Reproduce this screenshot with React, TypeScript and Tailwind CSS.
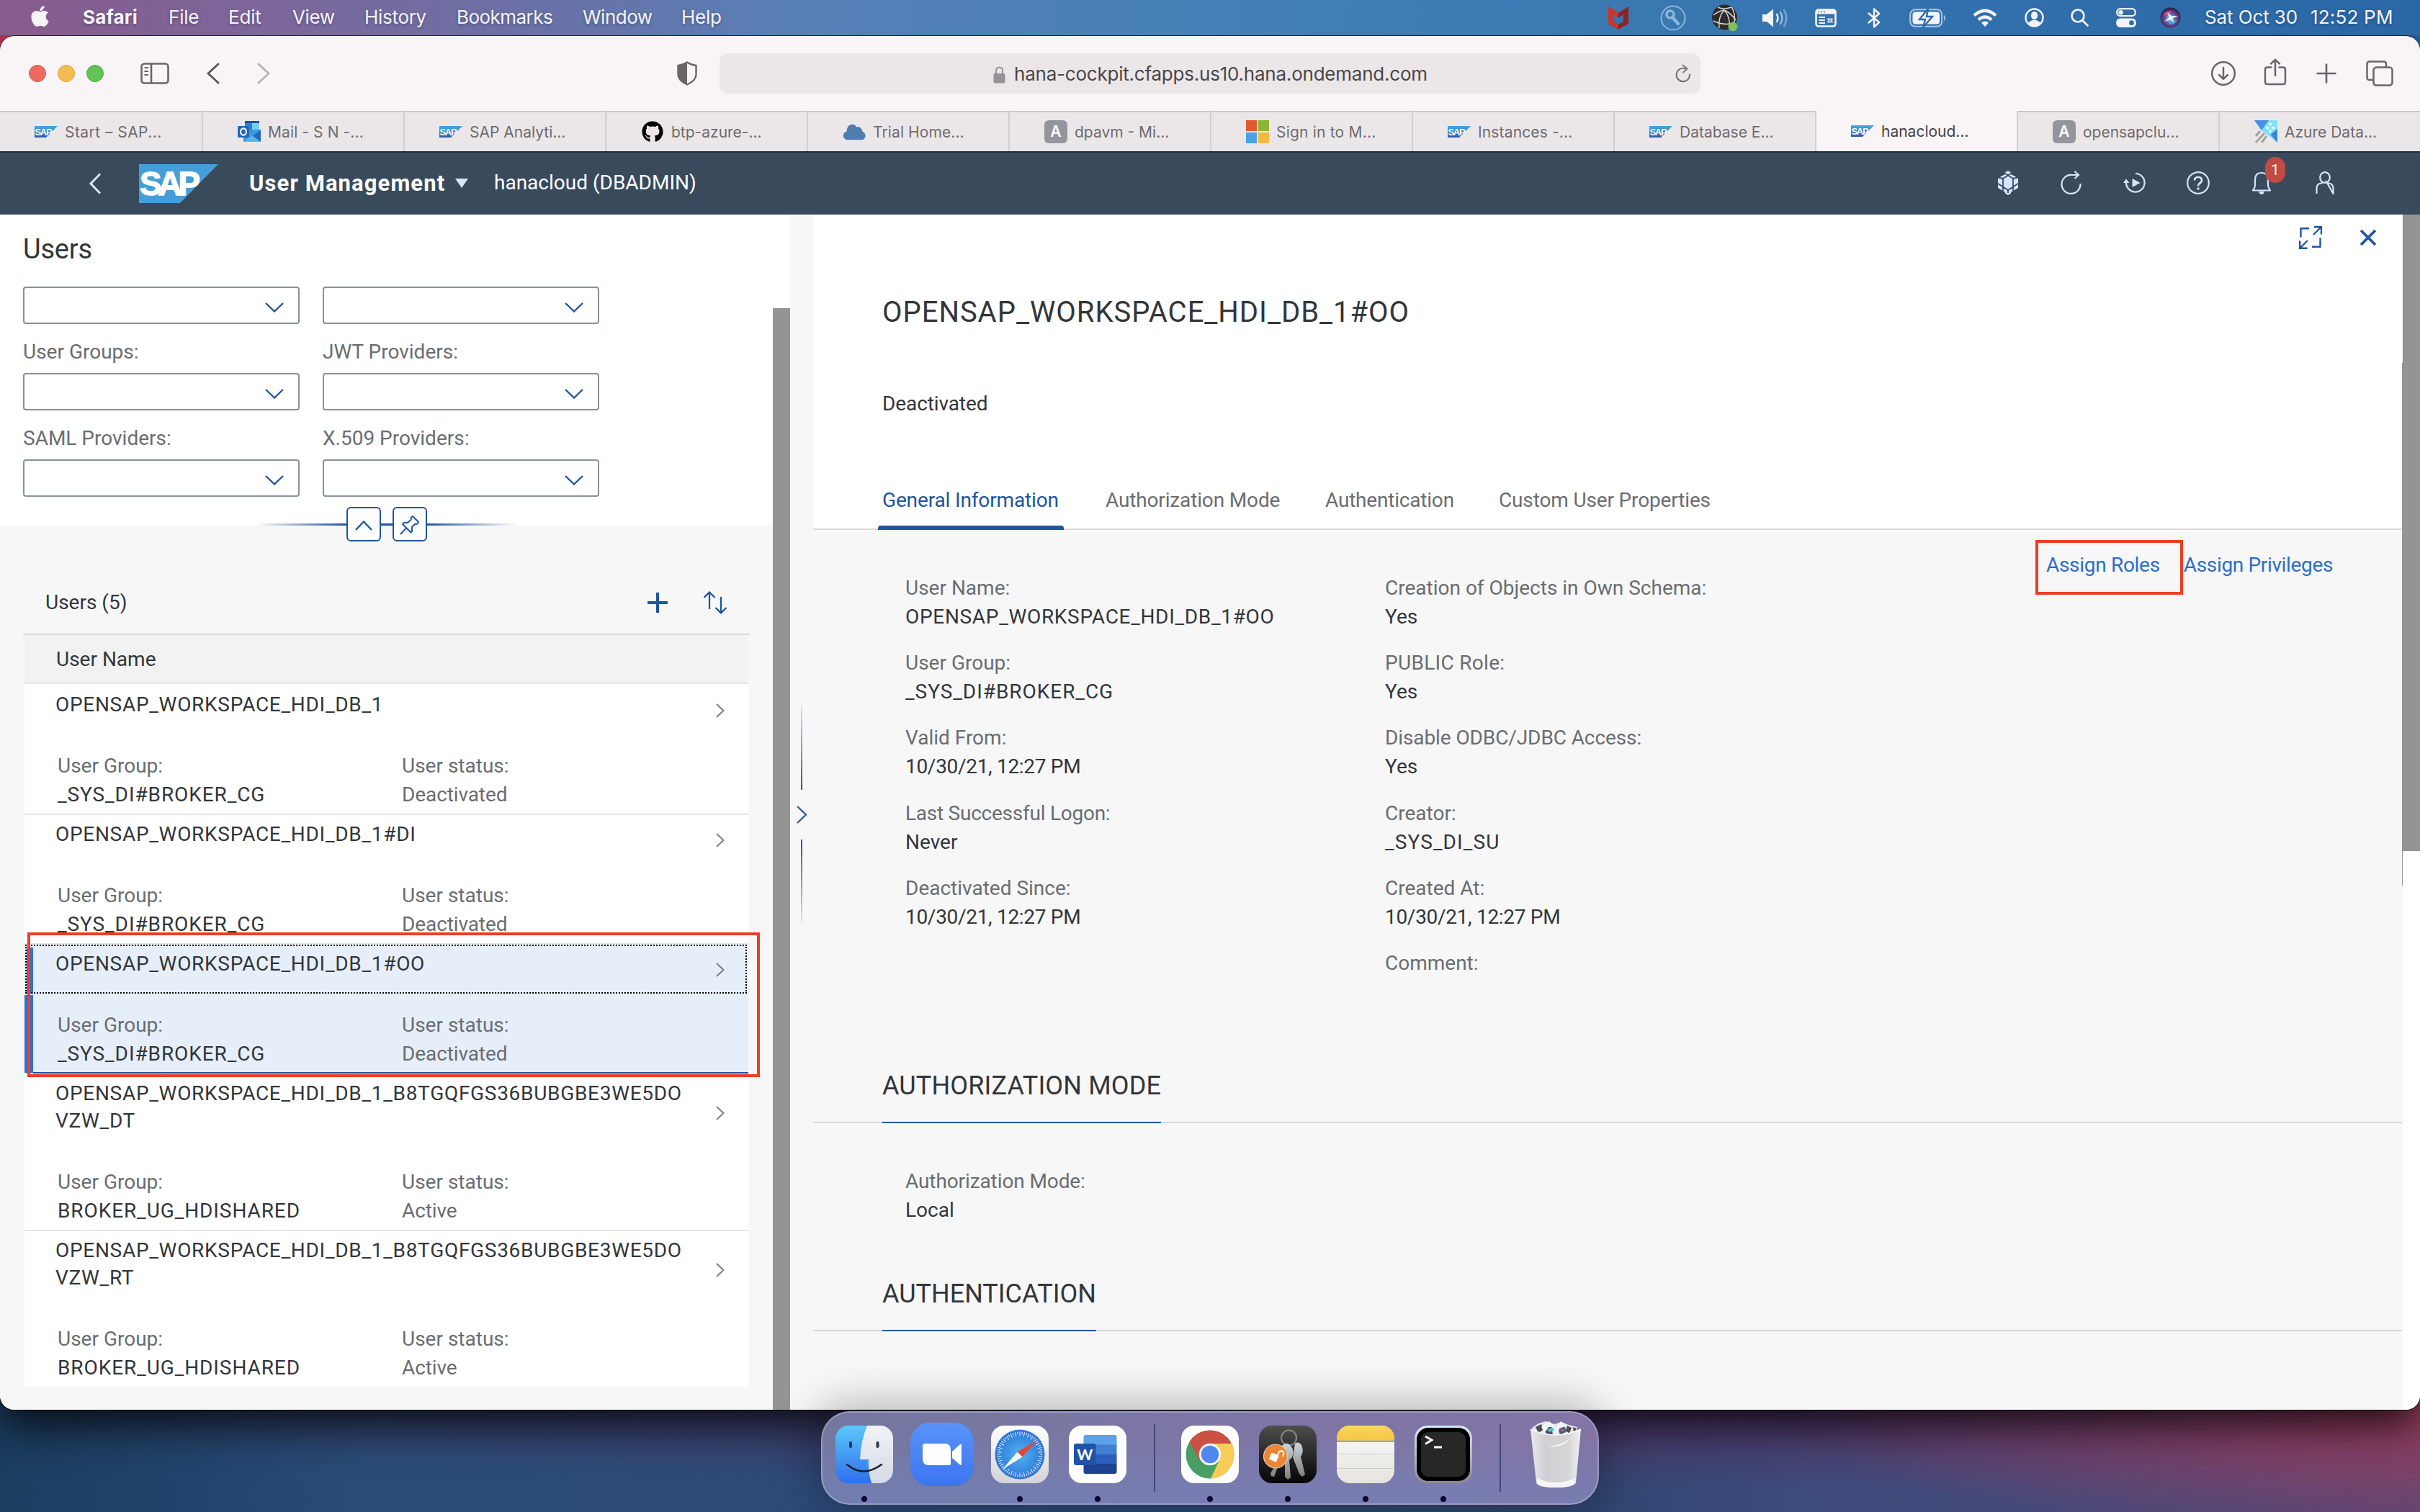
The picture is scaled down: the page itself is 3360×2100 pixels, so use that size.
import React from "react";
import { FaApple, FaGithub } from "react-icons/fa";

type Children = { children?: React.ReactNode };

/* ---------- shared marks ---------- */

function SapMini() {
  return (
    <svg width="32" height="16" viewBox="0 0 32 16" className="shrink-0">
      <defs>
        <linearGradient id="sapMini" x1="0" y1="0" x2="0" y2="1">
          <stop offset="0" stopColor="#45a9e3" />
          <stop offset="1" stopColor="#2d5cab" />
        </linearGradient>
      </defs>
      <path d="M0 0H32L16 16H0Z" fill="url(#sapMini)" />
      <text x="0.5" y="12.6" fontFamily="Liberation Sans, sans-serif" fontWeight="700" fontSize="13" letterSpacing="-1.3" fill="#fff">SAP</text>
    </svg>
  );
}

function OutlookIcon() {
  return (
    <svg width="32" height="30" viewBox="0 0 32 30" className="shrink-0">
      <rect x="10" y="0" width="20" height="16" fill="#1f4f9c" />
      <rect x="10" y="3" width="10" height="12" fill="#2f7fd2" />
      <rect x="20" y="3" width="10" height="12" fill="#6fd0f5" />
      <path d="M8 12H32V29H8Z" fill="#3d97de" />
      <path d="M8 13L20 21L32 13V29Z" fill="#2567b8" />
      <path d="M8 29L20 20L32 29Z" fill="#58b4ee" />
      <rect x="0" y="7" width="16" height="16" rx="1.5" fill="#1f66bd" />
      <ellipse cx="8" cy="15" rx="4" ry="4.6" fill="none" stroke="#fff" strokeWidth="2.2" />
    </svg>
  );
}

function CloudIcon() {
  return (
    <svg width="32" height="24" viewBox="0 0 34 24" className="shrink-0">
      <path d="M8 24C3 24 1 20.500 1 17.500C1 14 3.500 12 6 11.500C6 5 9.500 1 14 1C17 1 19.500 2.500 20.500 5C24 4 28.500 6 29 11.500C32 12.500 33.500 15 33.500 18C33.500 21.500 31 24 27 24Z" fill="#4f7eae" />
    </svg>
  );
}

function MicrosoftIcon() {
  return (
    <svg width="32" height="32" viewBox="0 0 32 32" className="shrink-0">
      <rect width="15" height="15" fill="#e1592f" />
      <rect x="17" width="15" height="15" fill="#8bb536" />
      <rect y="17" width="15" height="15" fill="#48a3e7" />
      <rect x="17" y="17" width="15" height="15" fill="#f4b83e" />
    </svg>
  );
}

function AzureDataIcon() {
  return (
    <svg width="32" height="32" viewBox="0 0 32 32" className="shrink-0">
      <path d="M0 0H32V31L10 14Z" fill="#7fe0f7" />
      <path d="M0 0H20L10 14Z" fill="#4a90dd" />
      <path d="M32 6V31L20 17Z" fill="#3b84d6" />
      <path d="M12 13L20 3H32V12L22 20Z" fill="#7fe3f9" />
      <path d="M2 22L8 15M2 31L14 18M10 31L17 22" stroke="#a5a2a5" strokeWidth="3" />
      <g fill="#fff">
        <circle cx="22" cy="5.500" r="2" />
        <circle cx="18" cy="10.500" r="2" />
        <circle cx="26" cy="10.500" r="2" />
        <circle cx="22" cy="15" r="2" />
      </g>
    </svg>
  );
}

function LetterIcon() {
  return (
    <span className="flex h-8 w-8 shrink-0 items-center justify-center rounded-md bg-[#94949e] text-[21px] font-semibold text-white">A</span>
  );
}

/* ---------- macOS menu bar ---------- */

const menus: [string, string][] = [
  ["Safari", "w-[119px] font-bold tracking-[0.2px]"],
  ["File", "w-[83px] tracking-[-0.2px]"],
  ["Edit", "w-[89px] tracking-[-0.2px]"],
  ["View", "w-[100px] tracking-[-0.4px]"],
  ["History", "w-[128px] tracking-[-0.3px]"],
  ["Bookmarks", "w-[175px] tracking-[-0.55px]"],
  ["Window", "w-[137px] tracking-[-0.5px]"],
  ["Help", "w-[80px] tracking-[-0.3px]"],
];

function MenuBar() {
  return (
    <div className="relative z-10 flex h-[49px] shrink-0 items-center bg-[linear-gradient(to_right,#885b8e,#7b689c_12%,#6c70a6_21%,#577fb5_33%,#4581b8_50%,#3b79b2_66%,#306eac_85%,#2b67a5)] text-[26px] text-[#f4f4f8] [text-shadow:0_2px_4px_rgba(0,0,0,0.25)]">
      <FaApple className="ml-[43px] mr-[47px] h-[33px] w-[25px] -translate-y-0.5" />
      {menus.map(([label, cls]) => (
        <span key={label} className={`shrink-0 -translate-y-px ${cls}`}>{label}</span>
      ))}

      <div className="ml-auto flex items-center">
        <svg width="28" height="32" viewBox="0 0 28 32">
          <path d="M0 0L14 9L28 0V24L14 32L0 24Z" fill="#8d2322" />
          <path d="M0 0L14 9V16L7 11.500V21L14 25V32L0 24Z" fill="#c9352c" />
          <path d="M7 11L14 16L21 11V21L14 25L7 21Z" fill="#3474b0" />
        </svg>
        <svg className="ml-[44px]" width="36" height="38" viewBox="0 0 36 38" fill="none" stroke="#8db6dc">
          <circle cx="18" cy="19" r="16.500" strokeWidth="2" />
          <circle cx="14" cy="14" r="5" strokeWidth="3.500" />
          <path d="M17 18L25 27" strokeWidth="4.500" strokeLinecap="round" />
        </svg>
        <svg className="ml-[36px]" width="36" height="38" viewBox="0 0 36 38">
          <circle cx="17.500" cy="18" r="17.500" fill="#2d2c2c" />
          <g fill="none" stroke="#d9d5cf" strokeWidth="1.500">
            <path d="M8 4Q16 8 27 4M2 15Q10 9 17 8Q26 12 33 22M17 8Q8 18 10 33M17 8Q26 18 24 34M2 23Q16 30 31 26M27 4Q33 12 31 26" />
          </g>
          <circle cx="29" cy="31" r="6.500" fill="#7fc05b" />
        </svg>
        <svg className="ml-[34px]" width="37" height="28" viewBox="0 0 37 28">
          <path d="M0 9H6L15 1.500V26.500L6 19H0Z" fill="#f4f4f8" />
          <g fill="none" strokeWidth="2.400" strokeLinecap="round">
            <path d="M20 9Q23 14 20 19" stroke="#f4f4f8" />
            <path d="M25 6Q30 14 25 22" stroke="#9dbfe0" />
            <path d="M30 3Q37 14 30 25" stroke="#7ba8d3" />
          </g>
        </svg>
        <svg className="ml-[36px]" width="30" height="26" viewBox="0 0 30 26">
          <rect x="1.500" y="1.500" width="27" height="23" rx="3.500" fill="none" stroke="#f4f4f8" strokeWidth="2.600" />
          <rect x="1.500" y="2" width="27" height="5.500" fill="#f4f4f8" />
          <path d="M4 4.500H6M8 4.500H10M12 4.500H14" stroke="#3474b0" strokeWidth="1.600" />
          <path d="M5.500 12H14M5.500 16H14M5.500 20H14" stroke="#f4f4f8" strokeWidth="2" />
          <path d="M19 13.500V19M22.500 13.500V19M17 14.500H25M17 18.500H25" stroke="#f4f4f8" strokeWidth="1.500" />
        </svg>
        <svg className="ml-[43px]" width="18" height="28" viewBox="0 0 18 28" fill="none" stroke="#f4f4f8" strokeWidth="2.400" strokeLinejoin="round" strokeLinecap="round">
          <path d="M1.500 7.500L16 20L9 26.500V1.500L16 8L1.500 20.500" />
        </svg>
        <svg className="ml-[40px]" width="51" height="26" viewBox="0 0 51 26">
          <rect x="1.200" y="1.200" width="44" height="23.600" rx="7" fill="none" stroke="#a9c7e4" strokeWidth="2" />
          <rect x="4.500" y="4.500" width="37.500" height="17" rx="4" fill="#f4f4f8" />
          <path d="M26 0L14 15H22L19 26L32 11H24Z" fill="#f4f4f8" stroke="#306eab" strokeWidth="2.500" />
          <path d="M48 8.500Q51.500 13 48 17.500Z" fill="#a9c7e4" />
        </svg>
        <svg className="ml-[37px]" width="34" height="25" viewBox="0 0 34 25" fill="none" stroke="#f4f4f8" strokeWidth="4.200">
          <path d="M2 9.500Q17 -4 32 9.500" />
          <path d="M8 15.500Q17 7.500 26 15.500" />
          <path d="M12 19.500Q17 15.500 22 19.500L17 25Z" fill="#f4f4f8" stroke="none" />
        </svg>
        <svg className="ml-[38px]" width="27" height="27" viewBox="0 0 27 27">
          <circle cx="13.500" cy="13.500" r="12" fill="none" stroke="#f4f4f8" strokeWidth="2.400" />
          <ellipse cx="13.500" cy="10.500" rx="4.600" ry="5.500" fill="#f4f4f8" />
          <path d="M4.500 21Q13.500 12.500 22.500 21Q13.500 30 4.500 21Z" fill="#f4f4f8" />
        </svg>
        <svg className="ml-[37px]" width="25" height="25" viewBox="0 0 25 25" fill="none" stroke="#f4f4f8" strokeWidth="2.700" strokeLinecap="round">
          <circle cx="10" cy="10" r="8.500" />
          <path d="M16.500 16.500L23.500 23.500" />
        </svg>
        <svg className="ml-[38px]" width="28" height="27" viewBox="0 0 28 27">
          <rect x="1.200" y="1.200" width="25.600" height="10" rx="5" fill="none" stroke="#f4f4f8" strokeWidth="2.300" />
          <circle cx="6.500" cy="6.200" r="3.200" fill="#f4f4f8" />
          <rect x="0" y="14.500" width="28" height="12.500" rx="6.200" fill="#f4f4f8" />
          <circle cx="21.500" cy="20.700" r="3.400" fill="#306eac" />
        </svg>
        <svg className="ml-[33px]" width="29" height="29" viewBox="0 0 29 29">
          <defs>
            <radialGradient id="siri" cx="0.5" cy="0.55" r="0.55">
              <stop offset="0" stopColor="#bfe9f5" />
              <stop offset="0.450" stopColor="#5b62b8" />
              <stop offset="0.750" stopColor="#5d2f6d" />
              <stop offset="1" stopColor="#1d2238" />
            </radialGradient>
          </defs>
          <circle cx="14.500" cy="14.500" r="14" fill="url(#siri)" />
          <path d="M4 11Q11 4 16 6Q13 9 14.500 14Q9 10 4 11Z" fill="#e0559a" opacity="0.800" />
          <path d="M24 19Q18 25 12 23Q16 20 14.500 15Q19 19 24 19Z" fill="#37b3dd" opacity="0.800" />
          <path d="M6 20L13 14L10 7L15.500 12L25 12L17 15.500L20 22L14.500 17Z" fill="#eafaff" />
        </svg>
        <span className="ml-[33px] w-[147px] -translate-y-px tracking-[-0.1px]">Sat Oct 30</span>
        <span className="w-[152px] -translate-y-px whitespace-nowrap tracking-[0.2px]">12:52 PM</span>
      </div>
    </div>
  );
}

/* ---------- Safari chrome ---------- */

function Toolbar() {
  return (
    <div className="flex h-[104px] shrink-0 items-center bg-[#f9f5f7] text-[#6a6568]">
      <div className="ml-[40px] flex gap-4">
        <span className="h-6 w-6 rounded-full border border-[#d8584e] bg-[#ee6a5f]" />
        <span className="h-6 w-6 rounded-full border border-[#d9a33d] bg-[#f5bd4f]" />
        <span className="h-6 w-6 rounded-full border border-[#50a843] bg-[#61c454]" />
      </div>
      <svg className="ml-[51px]" width="40" height="30" viewBox="0 0 40 30" fill="none" stroke="currentColor" strokeWidth="2.600">
        <rect x="1.500" y="1.500" width="37" height="27" rx="4" />
        <path d="M15 1.500V28.500" />
        <path d="M5.500 7H11M5.500 12H11M5.500 17H11" strokeWidth="1.900" />
      </svg>
      <svg className="ml-[51px]" width="19" height="30" viewBox="0 0 19 30" fill="none" stroke="#5c585b" strokeWidth="3" strokeLinecap="round" strokeLinejoin="round">
        <path d="M17 2L3 15L17 28" />
      </svg>
      <svg className="ml-[52px]" width="19" height="30" viewBox="0 0 19 30" fill="none" stroke="#b9b4b7" strokeWidth="3" strokeLinecap="round" strokeLinejoin="round">
        <path d="M2 2L16 15L2 28" />
      </svg>
      <svg className="ml-[564px]" width="28" height="34" viewBox="0 0 28 34">
        <path d="M14 1.500Q20 5.500 26.500 6V19Q26 27 14 32.500Q2 27 1.500 19V6Q8 5.500 14 1.500Z" fill="none" stroke="currentColor" strokeWidth="2.400" />
        <path d="M14 1V33Q2 27 1 19V5.500Q8 5 14 1Z" fill="currentColor" />
      </svg>
      <div className="ml-[31px] flex h-[56px] w-[1362px] items-center rounded-xl bg-[#ebe7e9]">
        <svg className="ml-[380px] mt-[3px]" width="17" height="24" viewBox="0 0 17 24">
          <rect x="0.500" y="10" width="16" height="13.500" rx="2" fill="#969295" />
          <path d="M4 11V6.500Q4 1.500 8.500 1.500T13 6.500V11" fill="none" stroke="#969295" strokeWidth="2" />
        </svg>
        <span className="ml-[12px] mt-px whitespace-nowrap text-[26px] tracking-[-0.22px] text-[#4a4649]">hana-cockpit.cfapps.us10.hana.ondemand.com</span>
        <svg className="ml-auto mr-[13px]" width="22" height="26" viewBox="0 0 22 26" fill="none" stroke="#7a767a" strokeWidth="2.100" strokeLinecap="round" strokeLinejoin="round">
          <path d="M20 14.500A9.200 9.200 0 1 1 13 6L16 6.500" />
          <path d="M10.500 1.500L16.500 6.500L11 11.500" />
        </svg>
      </div>
      <svg className="ml-[708px]" width="36" height="36" viewBox="0 0 36 36" fill="none" stroke="currentColor" strokeWidth="2.500" strokeLinecap="round" strokeLinejoin="round">
        <circle cx="18" cy="18" r="15.800" />
        <path d="M18 10V25.500M12 20L18 25.800L24 20" />
      </svg>
      <svg className="ml-[38px] -translate-y-0.5" width="32" height="38" viewBox="0 0 32 38" fill="none" stroke="currentColor" strokeWidth="2.500" strokeLinecap="round" strokeLinejoin="round">
        <path d="M10.500 12.500H5Q2 12.500 2 15.500V33Q2 36 5 36H27Q30 36 30 33V15.500Q30 12.500 27 12.500H21.500" />
        <path d="M16 24V2M10 7.500L16 1.800L22 7.500" />
      </svg>
      <svg className="ml-[41px]" width="28" height="28" viewBox="0 0 28 28" fill="none" stroke="currentColor" strokeWidth="2.700" strokeLinecap="round">
        <path d="M14 1.500V26.500M1.500 14H26.500" />
      </svg>
      <svg className="ml-[41px]" width="38" height="36" viewBox="0 0 38 36" fill="none" stroke="currentColor" strokeWidth="2.500" strokeLinejoin="round">
        <rect x="10.500" y="9.500" width="26" height="25" rx="4" />
        <path d="M28 9.500V5Q28 1.500 24.500 1.500H5Q1.500 1.500 1.500 5V23.500Q1.500 27 5 27H10.500" />
      </svg>
    </div>
  );
}

const tabs: { label: string; icon: React.ReactNode; active?: boolean; cls?: string }[] = [
  { label: "Start – SAP...", icon: <SapMini />, cls: "tracking-[0.45px]" },
  { label: "Mail - S N -...", icon: <OutlookIcon />, cls: "tracking-[0.1px]" },
  { label: "SAP Analyti...", icon: <SapMini /> },
  { label: "btp-azure-...", icon: <FaGithub className="h-[30px] w-[30px] text-black" /> },
  { label: "Trial Home...", icon: <CloudIcon />, cls: "tracking-[0.1px]" },
  { label: "dpavm - Mi...", icon: <LetterIcon /> },
  { label: "Sign in to M...", icon: <MicrosoftIcon />, cls: "tracking-[0.2px]" },
  { label: "Instances -...", icon: <SapMini />, cls: "tracking-[0.15px]" },
  { label: "Database E...", icon: <SapMini /> },
  { label: "hanacloud...", icon: <SapMini />, active: true },
  { label: "opensapclu...", icon: <LetterIcon /> },
  { label: "Azure Data...", icon: <AzureDataIcon /> },
];

function TabStrip() {
  return (
    <div className="flex h-[56px] shrink-0 text-[21px]">
      {tabs.map((t) => (
        <div
          key={t.label}
          className={
            t.active
              ? "flex w-[280px] items-center gap-2.5 border-l-2 border-[#d3cfd1] bg-[#f9f5f7] pl-[48px] text-[#464246]"
              : "flex w-[280px] items-center gap-2.5 border-l-2 border-t-2 border-l-[#d3cfd1] border-t-[#cbc7c9] bg-[#ebe7e9] pl-[48px] text-[#6f6b6e] first:border-l-0"
          }
        >
          <span className="flex w-8 shrink-0 justify-center">{t.icon}</span>
          <span className={`mt-px whitespace-nowrap ${t.cls ?? ""}`}>{t.label}</span>
        </div>
      ))}
    </div>
  );
}

/* ---------- SAP shell header ---------- */

function ShellButton({ children }: Children) {
  return <div className="relative flex h-full w-[88px] items-center justify-center">{children}</div>;
}

function ShellHeader() {
  return (
    <div className="flex h-[88px] shrink-0 items-center border-t-2 border-[#1f3040] bg-[#394a5c] text-white">
      <svg className="ml-[123px]" width="18" height="30" viewBox="0 0 18 30" fill="none" stroke="#d3e6fa" strokeWidth="3">
        <path d="M16 1.500L3 15L16 28.500" />
      </svg>
      <svg className="ml-[52px]" width="110" height="54" viewBox="0 0 110 54">
        <path d="M0 0H110L57 54H0Z" fill="#449ed9" />
        <text x="1" y="43" fontFamily="Liberation Sans, sans-serif" fontWeight="700" fontSize="46" letterSpacing="-5" textLength="79" lengthAdjust="spacingAndGlyphs" fill="#fff" stroke="#fff" strokeWidth="1.500">SAP</text>
      </svg>
      <span className="-mt-0.5 ml-[43px] w-[286px] whitespace-nowrap text-[31px] font-bold leading-none tracking-[1.1px]">User Management</span>
      <svg className="-mt-0.5" width="18" height="13" viewBox="0 0 18 13">
        <path d="M0 0H18L9 13Z" fill="#d3e6fa" />
      </svg>
      <span className="-mt-0.5 ml-[36px] text-[28px] leading-none">hanacloud (DBADMIN)</span>

      <div className="ml-auto mr-[88px] flex h-full text-[#d3e6fa]">
        <ShellButton>
          <svg width="30" height="34" viewBox="0 0 30 34" className="-mt-0.5">
            <path d="M15 0L19 2.500V5L29 10.500V24L19 30V31.500L15 34L11 31.500V30L1 24V10.500L11 5V2.500Z" fill="currentColor" />
            <path d="M15 6.500L8 11V22.500L15 27L22 22.500V11ZM11 4L15 6.500L19 4M8 11L1 9.500M22 11L29 9.500M1 18L8 22.500V28M29 18L22 22.500V28M15 27V31" fill="none" stroke="#394a5c" strokeWidth="1.800" />
          </svg>
        </ShellButton>
        <ShellButton>
          <svg width="30" height="34" viewBox="0 0 30 34" fill="none" stroke="currentColor" strokeWidth="2.200" className="-mt-0.5">
            <path d="M27.500 18A13 13 0 1 1 16 6H24" />
            <path d="M19.500 1L25 6L19.500 11" />
          </svg>
        </ShellButton>
        <ShellButton>
          <svg width="34" height="30" viewBox="0 0 34 30" fill="none" stroke="currentColor" strokeWidth="2.200" className="-mt-0.5">
            <path d="M18 2A12.800 12.800 0 1 1 5 14" />
            <path d="M1 15L5 9.500L9.500 15Z" fill="currentColor" stroke="none" />
            <path d="M13.500 9L24.500 15L13.500 21Z" fill="currentColor" stroke="none" />
          </svg>
        </ShellButton>
        <ShellButton>
          <svg width="32" height="32" viewBox="0 0 32 32" fill="none" stroke="currentColor" strokeWidth="2.200" className="-mt-0.5">
            <circle cx="16" cy="16" r="14.800" />
            <path d="M11 12.500Q11 8 16 8T21 12.500Q21 15 18 16.500Q16 18 16 20.500" strokeWidth="2.600" />
            <circle cx="16" cy="24" r="1.800" fill="currentColor" stroke="none" />
          </svg>
        </ShellButton>
        <ShellButton>
          <svg width="28" height="32" viewBox="0 0 28 32" fill="none" stroke="currentColor" strokeWidth="2.200" strokeLinejoin="round" className="-mt-0.5">
            <path d="M2 26.500Q5 23 5 19V12Q5 2 14 2T23 12V19Q23 23 26 26.500Z" />
            <path d="M10 28H18Q17 32 14 32T10 28Z" fill="currentColor" stroke="none" />
          </svg>
          <span className="absolute left-[49px] top-[6px] flex h-9 w-7 items-center justify-center rounded-full bg-[#bf4b44] text-[21px] leading-none text-white">1</span>
        </ShellButton>
        <ShellButton>
          <svg width="26" height="32" viewBox="0 0 26 32" fill="none" stroke="currentColor" strokeWidth="2.200" className="-mt-0.5">
            <ellipse cx="13" cy="8.500" rx="6.800" ry="7.400" />
            <path d="M1.500 30.900V24Q1.500 17 8 16.500L10.500 15M15.500 15L18 16.500Q24.500 17 24.500 24V30.900Z" />
          </svg>
        </ShellButton>
      </div>
    </div>
  );
}

/* ---------- left: user list ---------- */

function Select() {
  return (
    <div className="flex h-[52px] w-[384px] items-center justify-end rounded border-2 border-[#89919a] bg-white pr-[20px] pt-1.5">
      <svg width="26" height="14" viewBox="0 0 26 14" fill="none" stroke="#20559d" strokeWidth="2.400">
        <path d="M1 1L13 12.500L25 1" />
      </svg>
    </div>
  );
}

function FilterField({ label }: { label: string }) {
  return (
    <div>
      <div className="pb-[9px] pt-[19px] leading-[40px] text-[#6a6d70]">{label}</div>
      <Select />
    </div>
  );
}

function RowArrow() {
  return (
    <svg width="12" height="20" viewBox="0 0 12 20" fill="none" stroke="#7b7e82" strokeWidth="2" className="shrink-0">
      <path d="M1 1L10.500 10L1 19" />
    </svg>
  );
}

type UserRow = { name: string[]; group: string; status: string; selected?: boolean; last?: boolean };

const users: UserRow[] = [
  { name: ["OPENSAP_WORKSPACE_HDI_DB_1"], group: "_SYS_DI#BROKER_CG", status: "Deactivated" },
  { name: ["OPENSAP_WORKSPACE_HDI_DB_1#DI"], group: "_SYS_DI#BROKER_CG", status: "Deactivated" },
  { name: ["OPENSAP_WORKSPACE_HDI_DB_1#OO"], group: "_SYS_DI#BROKER_CG", status: "Deactivated", selected: true },
  { name: ["OPENSAP_WORKSPACE_HDI_DB_1_B8TGQFGS36BUBGBE3WE5DO", "VZW_DT"], group: "BROKER_UG_HDISHARED", status: "Active" },
  { name: ["OPENSAP_WORKSPACE_HDI_DB_1_B8TGQFGS36BUBGBE3WE5DO", "VZW_RT"], group: "BROKER_UG_HDISHARED", status: "Active", last: true },
];

function UserListRow({ row }: { row: UserRow }) {
  return (
    <div
      className={`relative flex flex-col pb-[6px] ${row.selected ? "bg-[#e6eff9]" : "bg-white"} ${row.last ? "" : "border-b-2 border-[#e5e5e5]"}`}
    >
      <div className="flex items-center justify-between pl-[43px] pr-[33px] pt-[8px]">
        <div className="leading-[38px] tracking-[0.7px] text-[#32363a]">
          {row.name.map((line) => (
            <div key={line}>{line}</div>
          ))}
        </div>
        <div className="mt-[15px]">
          <RowArrow />
        </div>
      </div>
      <div className="flex pl-[46px] pt-[46px] leading-[40px]">
        <div className="w-[478px]">
          <div className="text-[#6a6d70]">User Group:</div>
          <div className="tracking-[0.9px] text-[#32363a]">{row.group}</div>
        </div>
        <div className="text-[#6a6d70]">
          <div>User status:</div>
          <div className="tracking-[-0.1px]">{row.status}</div>
        </div>
      </div>
      {row.selected && (
        <>
          <span className="absolute left-0 top-[70px] h-[108px] w-3 bg-[#336fcb]" />
          <span className="absolute left-[3px] top-[4px] h-[64px] w-[9px] bg-[#336fcb]" />
          <span className="absolute -bottom-px left-3 right-0 h-0.5 bg-[#20559d]" />
          <span className="absolute left-[1px] right-[2px] top-0 h-[68px] border-2 border-dotted border-black" />
        </>
      )}
    </div>
  );
}

function UsersPanel() {
  return (
    <div className="relative flex h-full w-[1097px] shrink-0 bg-[#f7f7f7]">
      <div className="flex w-[1073px] flex-col">
        <div className="relative h-[432px] shrink-0 bg-white">
          <h1 className="flex h-[96px] items-center pl-8 pt-px text-[38px] tracking-[-0.2px] text-[#32363a]">Users</h1>
          <div className="flex flex-col px-8 pt-1">
            <div className="flex gap-8">
              <Select />
              <Select />
            </div>
            <div className="flex gap-8">
              <FilterField label="User Groups:" />
              <FilterField label="JWT Providers:" />
            </div>
            <div className="flex gap-8">
              <FilterField label="SAML Providers:" />
              <FilterField label="X.509 Providers:" />
            </div>
          </div>
          <div className="absolute bottom-0 left-[355px] h-[3px] w-[363px] bg-[linear-gradient(to_right,transparent,#20559d_35%,#20559d_65%,transparent)]" />
          <div className="absolute -bottom-[22px] left-[481px] flex gap-4">
            <div className="flex h-12 w-12 items-center justify-center rounded-md border-2 border-[#20559d] bg-white pt-1">
              <svg width="24" height="14" viewBox="0 0 24 14" fill="none" stroke="#20559d" strokeWidth="2.400">
                <path d="M1 13L12 1.500L23 13" />
              </svg>
            </div>
            <div className="flex h-12 w-12 items-center justify-center rounded-md border-2 border-[#20559d] bg-white pt-0.5">
              <svg width="28" height="28" viewBox="0 0 28 28" fill="none" stroke="#20559d" strokeWidth="2" strokeLinejoin="round">
                <path d="M18 2L26 10L24.500 12.500L21 13L17 17V23L15.500 24.500L4 13L5.500 11H11L15.500 7L16 3.500ZM9.500 18L1 27" />
              </svg>
            </div>
          </div>
        </div>

        <div className="ml-8 mr-8 mt-[84px] flex h-[68px] shrink-0 items-start justify-between border-b-2 border-[#d9d9d9]">
          <span className="ml-[31px] leading-[46px] text-[#32363a]">Users (5)</span>
          <div className="mr-[31px] flex h-[46px] items-center gap-[48px]">
            <svg width="30" height="30" viewBox="0 0 30 30" stroke="#20559d" strokeWidth="4.200">
              <path d="M15 1V29M1 15H29" />
            </svg>
            <svg width="34" height="32" viewBox="0 0 34 32" fill="none" stroke="#20559d" strokeWidth="2.300">
              <path d="M9 25V2M1.500 9L9 1.500L16.500 9M25 8V30M17.500 23L25 30.500L32.500 23" />
            </svg>
          </div>
        </div>

        <div className="ml-[34px] mr-[34px] flex flex-col">
          <div className="h-[68px] border-b-2 border-[#e5e5e5] bg-[#f2f2f2] pl-[44px] pt-px leading-[66px] text-[#32363a]">User Name</div>
          <div className="h-[2px] bg-white" />
          <div className="relative flex flex-col">
            {users.map((u) => (
              <UserListRow key={u.name.join("")} row={u} />
            ))}
            <span className="absolute left-[4px] top-[343px] h-[201px] w-[1017px] border-4 border-[#ec3e26]" />
          </div>
        </div>
      </div>
      <div className="flex w-6 flex-col bg-white pt-[130px]">
        <div className="flex-1 bg-[#949494]" />
      </div>
    </div>
  );
}

/* ---------- splitter ---------- */

function Splitter() {
  return (
    <div className="flex h-full w-8 shrink-0 flex-col items-center bg-[#f7f7f7] pt-[682px]">
      <span className="h-[117px] w-0.5 bg-gradient-to-b from-[#20559d]/10 to-[#20559d]" />
      <svg className="my-[22px]" width="16" height="25" viewBox="0 0 16 25" fill="none" stroke="#2a60ab" strokeWidth="2.400">
        <path d="M2 1L14 12.500L2 24" />
      </svg>
      <span className="h-[117px] w-0.5 bg-gradient-to-b from-[#20559d] to-[#20559d]/10" />
    </div>
  );
}

/* ---------- right: user detail ---------- */

function Field({ label, value, cls = "", labelCls = "" }: { label: string; value: string; cls?: string; labelCls?: string }) {
  return (
    <div className="mb-[24.2px] leading-[40px]">
      <div className={`text-[#6a6d70] ${labelCls}`}>{label}</div>
      <div className={`h-[40px] text-[#32363a] ${cls}`}>{value}</div>
    </div>
  );
}

function SectionTitle({ children, cls }: { children: string; cls: string }) {
  return (
    <div className="flex border-b-2 border-[#d9d9d9] pl-[96px]">
      <h2 className={`-mb-0.5 whitespace-nowrap border-b-2 border-[#20559d] pb-[25px] pt-px text-[36px] leading-[50px] text-[#32363a] ${cls}`}>{children}</h2>
    </div>
  );
}

function DetailPanel() {
  return (
    <div className="flex h-full w-[2206px] shrink-0 flex-col bg-[#f7f7f7]">
      <div className="flex h-[438px] flex-col border-b-2 border-[#d9d9d9] bg-white">
        <div className="flex h-[108px] justify-end gap-[52px] pr-[35px] pt-[16px]">
          <svg width="32" height="32" viewBox="0 0 32 32" fill="none" stroke="#20559d" strokeWidth="2.400">
            <path d="M2.500 15.500V3.200H14M29.500 16.500V28.800H18M21 1.200H31V11.500M30.500 1.500L20 12M1.200 20.500V30.800H11.500M1.500 30.500L12 20" />
          </svg>
          <svg className="mt-[4px]" width="24" height="24" viewBox="0 0 24 24" stroke="#20559d" strokeWidth="3.800">
            <path d="M2 2L22 22M22 2L2 22" />
          </svg>
        </div>
        <div className="pl-[96px]">
          <h2 className="text-[40px] leading-[56px] tracking-[0.97px] text-[#32363a]">OPENSAP_WORKSPACE_HDI_DB_1#OO</h2>
          <div className="mt-[79px] leading-[40px] tracking-[-0.1px] text-[#32363a]">Deactivated</div>
        </div>
        <div className="mt-auto flex h-[59px] pl-[96px] leading-[40px] text-[#6a6d70]">
          <div className="relative w-[310px] tracking-[-0.15px] text-[#20559d]">
            General Information
            <span className="absolute -left-[6px] bottom-[-2px] h-[6px] w-[258px] rounded-t bg-[#20559d]" />
          </div>
          <div className="w-[305px] tracking-[-0.15px]">Authorization Mode</div>
          <div className="w-[241px] tracking-[-0.2px]">Authentication</div>
          <div className="tracking-[-0.15px]">Custom User Properties</div>
        </div>
      </div>

      <div className="flex h-[746px] pl-[128px]">
        <div className="w-[666px] pt-[61px]">
          <Field label="User Name:" value="OPENSAP_WORKSPACE_HDI_DB_1#OO" cls="tracking-[0.68px]" />
          <Field label="User Group:" value="_SYS_DI#BROKER_CG" cls="tracking-[0.95px]" />
          <Field label="Valid From:" value="10/30/21, 12:27 PM" cls="tracking-[-0.3px]" />
          <Field label="Last Successful Logon:" value="Never" labelCls="tracking-[-0.25px]" />
          <Field label="Deactivated Since:" value="10/30/21, 12:27 PM" cls="tracking-[-0.3px]" />
        </div>
        <div className="flex-1 pt-[61px]">
          <Field label="Creation of Objects in Own Schema:" value="Yes" />
          <Field label="PUBLIC Role:" value="Yes" labelCls="tracking-[0.3px]" />
          <Field label="Disable ODBC/JDBC Access:" value="Yes" labelCls="tracking-[-0.1px]" />
          <Field label="Creator:" value="_SYS_DI_SU" cls="tracking-[1.1px]" />
          <Field label="Created At:" value="10/30/21, 12:27 PM" cls="tracking-[-0.3px]" />
          <Field label="Comment:" value="" />
        </div>
        <div className="relative mr-[96px] flex h-[69px] gap-[33px] pt-[29px] leading-[40px] text-[#2d6dc9]">
          <span className="tracking-[-0.3px]">Assign Roles</span>
          <span className="tracking-[-0.35px]">Assign Privileges</span>
          <span className="absolute -left-[15px] top-[14px] h-[76px] w-[205px] border-4 border-[#ec3e26]" />
        </div>
      </div>

      <SectionTitle cls="tracking-[0.15px]">AUTHORIZATION MODE</SectionTitle>
      <div className="h-[211px] pl-[128px] pt-[61px]">
        <Field label="Authorization Mode:" value="Local" labelCls="tracking-[-0.1px]" />
      </div>
      <SectionTitle cls="">AUTHENTICATION</SectionTitle>
    </div>
  );
}

function PageScrollbar() {
  return (
    <div className="flex h-full flex-1">
      <div className="flex w-px flex-col bg-[#f7f7f7] pt-[206px]">
        <div className="h-[726px] bg-[#949494]" />
      </div>
      <div className="flex-1 bg-white">
        <div className="h-[884px] bg-[#949494]" />
      </div>
    </div>
  );
}

/* ---------- dock ---------- */

function DockItem({ children, dot = true }: { children: React.ReactNode; dot?: boolean }) {
  return (
    <div className="flex h-full w-[108px] flex-col items-center">
      <div className="flex h-[116px] items-center justify-center">{children}</div>
      {dot && <span className="h-2 w-2 rounded-full bg-[#0a0535]" />}
    </div>
  );
}

function DockRule({ cls }: { cls: string }) {
  return <span className={`h-[94px] w-0.5 bg-[#444478] ${cls}`} />;
}

function Finder() {
  return (
    <svg width="80" height="80" viewBox="0 0 80 80">
      <defs>
        <linearGradient id="fin" x1="0" y1="0" x2="0" y2="1"><stop offset="0" stopColor="#5ac8fa" /><stop offset="1" stopColor="#2f6fee" /></linearGradient>
        <linearGradient id="fin2" x1="0" y1="0" x2="0" y2="1"><stop offset="0" stopColor="#f1f2f5" /><stop offset="1" stopColor="#d3dae6" /></linearGradient>
        <clipPath id="finc"><rect width="80" height="80" rx="18" /></clipPath>
      </defs>
      <g clipPath="url(#finc)">
        <rect width="80" height="80" fill="url(#fin)" />
        <path d="M44 0Q35 22 34 47H46Q45 64 50 80H80V0Z" fill="url(#fin2)" />
      </g>
      <path d="M21 24V29M58.500 24V29" stroke="#2c3745" strokeWidth="4" strokeLinecap="round" />
      <path d="M16 54Q38 73 64 54" fill="none" stroke="#1a1d22" strokeWidth="2.400" strokeLinecap="round" />
    </svg>
  );
}

function Zoom() {
  return (
    <svg width="88" height="88" viewBox="0 0 88 88">
      <defs><linearGradient id="zm" x1="0" y1="0" x2="0" y2="1"><stop offset="0" stopColor="#5794f8" /><stop offset="1" stopColor="#3d74f1" /></linearGradient></defs>
      <rect width="88" height="88" rx="27" fill="url(#zm)" />
      <path d="M17 32Q17 29 20 29H48Q56 29 56 38V57Q56 59 53 59H26Q17 59 17 50Z" fill="#fff" />
      <path d="M58 40L69 30Q71 28.500 71 31V57Q71 60 69 58.500L58 49Z" fill="#fff" />
    </svg>
  );
}

function SafariIcon() {
  const ticks = Array.from({ length: 60 }, (_, i) => i * 6);
  return (
    <svg width="80" height="80" viewBox="0 0 80 80">
      <defs>
        <linearGradient id="sf" x1="0" y1="0" x2="0" y2="1"><stop offset="0" stopColor="#fff" /><stop offset="1" stopColor="#d4d4d6" /></linearGradient>
        <radialGradient id="sf2"><stop offset="0" stopColor="#4fb5f0" /><stop offset="1" stopColor="#2f74d8" /></radialGradient>
      </defs>
      <rect width="80" height="80" rx="18" fill="url(#sf)" />
      <circle cx="40" cy="40" r="34.500" fill="url(#sf2)" />
      {ticks.map((a) => (
        <path key={a} d={a % 12 ? "M40 8.500V12" : "M40 8.500V14.500"} stroke="#e6f3fd" strokeWidth="1" transform={`rotate(${a} 40 40)`} />
      ))}
      <path d="M65 19.500L36.500 36.500L43.500 43.500Z" fill="#e2453a" />
      <path d="M15.500 61L36.500 36.500L43.500 43.500Z" fill="#f3f3f3" />
    </svg>
  );
}

function Word() {
  return (
    <svg width="80" height="80" viewBox="0 0 80 80">
      <defs><clipPath id="wc"><rect x="20.500" y="13" width="46" height="54" rx="3" /></clipPath></defs>
      <rect width="80" height="80" rx="18" fill="#fff" />
      <g clipPath="url(#wc)">
        <rect x="20" y="13" width="47" height="14" fill="#5aa3e8" />
        <rect x="20" y="26.500" width="47" height="14" fill="#417fd2" />
        <rect x="20" y="40" width="47" height="14" fill="#2c5db8" />
        <rect x="20" y="53" width="47" height="14" fill="#1f4390" />
      </g>
      <rect x="7" y="25" width="30.500" height="30" rx="3" fill="#2053a8" />
      <text x="22.300" y="47.500" textAnchor="middle" fontFamily="Lato, sans-serif" fontWeight="700" fontSize="21" fill="#fff">W</text>
    </svg>
  );
}

function Chrome() {
  return (
    <svg width="80" height="80" viewBox="0 0 80 80">
      <defs><clipPath id="cc"><circle cx="40" cy="40" r="33.500" /></clipPath></defs>
      <rect width="80" height="80" rx="18" fill="#fdfdfd" />
      <g clipPath="url(#cc)">
        <rect width="80" height="80" fill="#489e64" />
        <path d="M0 0H80V25H40L26 49L10 19Z" fill="#cc5144" />
        <path d="M40 25H80V80H38L53 48Z" fill="#f7cd55" />
        <path d="M12 22L26.500 49L40 40Z" fill="#cc5144" />
      </g>
      <circle cx="40" cy="40" r="15.300" fill="#f6f6f6" />
      <circle cx="40" cy="40" r="12.200" fill="#5088ee" />
    </svg>
  );
}

function KeychainIcon() {
  return (
    <svg width="80" height="80" viewBox="0 0 80 80">
      <defs>
        <linearGradient id="kc" x1="0" y1="0" x2="0" y2="1"><stop offset="0" stopColor="#4d4d4d" /><stop offset="1" stopColor="#050505" /></linearGradient>
        <linearGradient id="kcm" x1="0" y1="0" x2="0" y2="1"><stop offset="0" stopColor="#c8d6dd" /><stop offset="1" stopColor="#857c78" /></linearGradient>
      </defs>
      <rect width="80" height="80" rx="18" fill="url(#kc)" />
      <circle cx="41.500" cy="17" r="10.500" fill="none" stroke="#8d8479" strokeWidth="2.200" />
      <path d="M50 25Q55 21 59 27Q63 36 58 43L64 68L60 71L56 67L47 44Z" fill="url(#kcm)" />
      <path d="M22 56L26 58L21 71L17 70L16 66Z" fill="#8d8884" />
      <path d="M32 28Q38 22 43 27Q50 34 46 44L42 48L44 72L40 75L36 71V46Q28 38 32 28Z" fill="url(#kcm)" />
      <circle cx="23" cy="42.500" r="16.500" fill="#ee8535" stroke="#d9cfc4" strokeWidth="1.200" />
      <g transform="rotate(24 23 44)">
        <rect x="15.500" y="40" width="11" height="10" rx="1.200" fill="#fff" />
        <path d="M24.500 40V36Q24.500 32.500 28 32.500T31.500 36V39" fill="none" stroke="#fff" strokeWidth="2" />
      </g>
    </svg>
  );
}

function Notes() {
  return (
    <div className="flex h-20 w-20 flex-col overflow-hidden rounded-[18px] bg-[linear-gradient(#fafaf9,#e5e4df)]">
      <div className="h-[20px] bg-[linear-gradient(#fbd560,#f6c63f)]" />
      <div className="h-[3px] border-b border-dotted border-[#8d8c88] bg-[#c9b67a]" />
      <div className="h-[17px] border-b border-[#cfcecc]" />
      <div className="h-[20px] border-b border-[#cfcecc]" />
    </div>
  );
}

function Terminal() {
  return (
    <div className="flex h-20 w-20 rounded-[18px] bg-[linear-gradient(#d5ebf5,#8a8a8f)] p-[3px]">
      <div className="flex flex-1 rounded-[16px] bg-black p-[6px]">
        <div className="relative flex-1 rounded-[10px] bg-[#272727]">
          <svg width="34" height="30" viewBox="0 0 34 30" fill="none" stroke="#fff" strokeWidth="2.800">
            <path d="M6 6L15 11L6 16.500M18 21H29" />
          </svg>
        </div>
      </div>
    </div>
  );
}

function Trash() {
  return (
    <svg width="72" height="94" viewBox="0 0 72 94">
      <defs>
        <linearGradient id="tr" x1="0" y1="0" x2="1" y2="0"><stop offset="0" stopColor="#e9e9ee" /><stop offset="0.300" stopColor="#d0d0d2" /><stop offset="0.750" stopColor="#d6d6d8" /><stop offset="1" stopColor="#f2f2f5" /></linearGradient>
      </defs>
      <path d="M3 10L12 4L22 1L34 5L44 2L54 6L66 9L64 20H8Z" fill="#e7e7ea" />
      <path d="M1 12Q36 28 71 12L64 86Q62 93 36 93T9 86Z" fill="url(#tr)" />
      <path d="M8 9L16 5L20 12L12 17ZM18 12L30 8L32 20L24 19ZM52 7L58 10L55 18L50 14ZM60 9L65 11L61 17Z" fill="#4d4e53" />
      <path d="M24 12L32 10L34 14L27 16Z" fill="#56c3c9" />
      <path d="M39 10L47 7L52 15L42 20Z" fill="#4b5f8c" />
      <path d="M43 12L47 11L48 15L44 16Z" fill="#b8643f" />
      <path d="M27 1L36 9L26 9L20 18L16 8ZM43 1L51 7L41 11L38 20L35 14Z" fill="#f6f6f8" />
      <path d="M1 12Q36 28 71 12" fill="none" stroke="#fbfbfd" strokeWidth="1.500" />
      <path d="M10 80Q36 92 63 80L62 87Q58 93 36 93T10 87Z" fill="#f6f6f7" />
      <path d="M26 36Q48 38 56 24Q50 32 26 36Z" fill="#f4f4f6" />
    </svg>
  );
}

function Dock() {
  return (
    <div className="absolute bottom-[10px] left-[1140px] z-20 flex h-[130px] w-[1080px] items-start rounded-[40px] border-2 border-white/25 bg-[linear-gradient(to_top,rgba(112,132,190,0.55),transparent_75%),linear-gradient(to_right,#74779f,#7d76a5_50%,#8374a4)] pl-[4px] shadow-[0_0_60px_10px_rgba(0,0,0,0.28)]">
      <DockItem><Finder /></DockItem>
      <DockItem dot={false}><Zoom /></DockItem>
      <DockItem><SafariIcon /></DockItem>
      <DockItem><Word /></DockItem>
      <DockRule cls="ml-[24px] mr-[22px] mt-4" />
      <DockItem><Chrome /></DockItem>
      <DockItem><KeychainIcon /></DockItem>
      <DockItem><Notes /></DockItem>
      <DockItem><Terminal /></DockItem>
      <DockRule cls="ml-[24px] mr-[22px] mt-4" />
      <DockItem dot={false}><Trash /></DockItem>
    </div>
  );
}

/* ---------- desktop ---------- */

export default function App() {
  return (
    <div className="relative flex h-[2100px] w-[3360px] flex-col overflow-hidden [background:linear-gradient(to_right,#c03a5a,#c03a5a_30%,#2b67a5_60%)_top/100%_200px_no-repeat,radial-gradient(ellipse_900px_170px_at_3360px_1960px,#9c3f60,transparent),radial-gradient(ellipse_2400px_120px_at_2300px_1950px,#55376b,transparent),linear-gradient(to_right,#1a3d60,#294b77_15%,#2d4a78_35%,#304570_65%,#3d4b7a_75%,#4c4878_92%,#5a4672)] font-[Inter,sans-serif]">
      <MenuBar />
      <div className="mt-px flex h-[1908px] shrink-0 flex-col overflow-hidden rounded-[20px] shadow-[0_0_0_1px_rgba(0,0,0,0.55),0_20px_60px_0px_rgba(0,0,0,0.85)]">
        <Toolbar />
        <TabStrip />
        <div className="flex flex-1 flex-col font-[Roboto,sans-serif] text-[28px]">
          <ShellHeader />
          <div className="flex h-[1660px] bg-[#f7f7f7]">
            <UsersPanel />
            <Splitter />
            <DetailPanel />
            <PageScrollbar />
          </div>
        </div>
      </div>
      <Dock />
    </div>
  );
}
